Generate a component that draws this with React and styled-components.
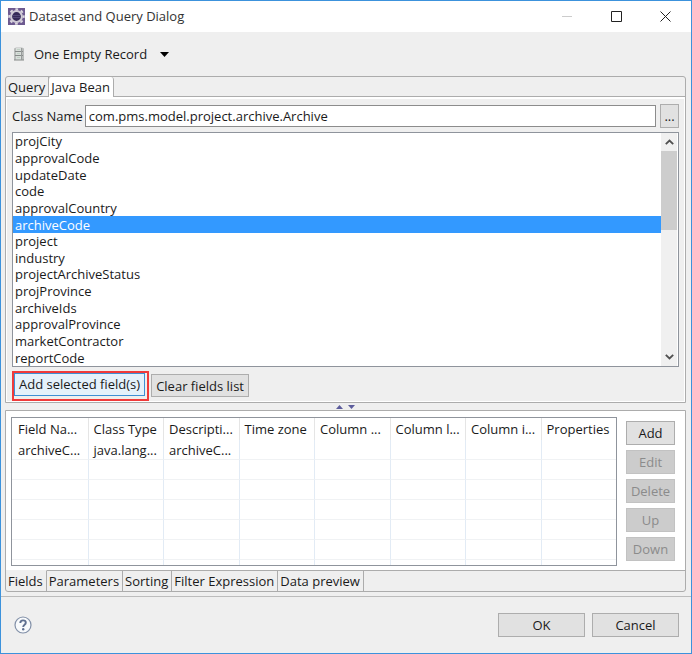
import {useState} from 'react'
import styled, {createGlobalStyle} from 'styled-components'

const beanFields = [
	"projCity",
	"approvalCode",
	"updateDate",
	"code",
	"approvalCountry",
	"archiveCode",
	"project",
	"industry",
	"projectArchiveStatus",
	"projProvince",
	"archiveIds",
	"approvalProvince",
	"marketContractor",
	"reportCode"
]

const columns = ["Field Na...", "Class Type", "Descripti...", "Time zone", "Column ...", "Column l...", "Column i...", "Properties"]

const rows = [
	["archiveC...", "java.lang...", "archiveC...", "", "", "", "", ""],
	["", "", "", "", "", "", "", ""],
	["", "", "", "", "", "", "", ""],
	["", "", "", "", "", "", "", ""],
	["", "", "", "", "", "", "", ""],
	["", "", "", "", "", "", "", ""],
	["", "", "", "", "", "", "", ""]
]

const bottomTabs = ["Fields", "Parameters", "Sorting", "Filter Expression", "Data preview"]

export default function App(){

	const [className, setClassName] = useState("com.pms.model.project.archive.Archive")
	const [selected, setSelected] = useState("archiveCode")
	const [topTab, setTopTab] = useState("Java Bean")
	const [bottomTab, setBottomTab] = useState("Fields")

	return(
		<>
			<GlobalStyle/>
			<Dialog>
				<TitleBar>
					<AppIcon/>
					<Title>Dataset and Query Dialog</Title>
					<TitleButton aria-label="Minimize" disabled>
						<svg width="11" height="11"><path d="M0 5.5h10" stroke="#cccccc"/></svg>
					</TitleButton>
					<TitleButton aria-label="Maximize">
						<svg width="11" height="11"><path d="M.5 .5h10v10h-10z" fill="none" stroke="#222222"/></svg>
					</TitleButton>
					<TitleButton aria-label="Close">
						<svg width="11" height="11"><path d="M.5 .5l10 10M10.5 .5l-10 10" stroke="#222222"/></svg>
					</TitleButton>
				</TitleBar>

				<ToolBar>
					<RecordButton>
						<RecordIcon/>
						One Empty Record
						<svg width="9" height="5"><path d="M0 0h9L4.500 5z" fill="#000000"/></svg>
					</RecordButton>
				</ToolBar>

				<BeanFolder>
					<TopTabs role="tablist">
						{["Query", "Java Bean"].map((elem)=>
							<TopTab key={elem} role="tab" aria-selected={topTab===elem} $active={topTab===elem} onClick={()=>setTopTab(elem)}>{elem}</TopTab>
						)}
					</TopTabs>
					<BeanPanel>
						<ClassRow>
							<label htmlFor="className">Class Name</label>
							<ClassInput id="className" value={className} onChange={(e)=>setClassName(e.target.value)}/>
							<BrowseButton aria-label="Browse">...</BrowseButton>
						</ClassRow>
						<ListBox>
							<FieldList role="listbox" aria-label="Bean fields">
								{beanFields.map((elem)=>
									<FieldItem key={elem} role="option" aria-selected={selected===elem} $active={selected===elem} onClick={()=>setSelected(elem)}>{elem}</FieldItem>
								)}
							</FieldList>
							<ScrollBar>
								<ScrollButton aria-label="Scroll up">
									<svg width="9" height="6"><path d="M.8 5.200L4.500 1.500 8.200 5.200" fill="none" stroke="#505050" strokeWidth="1.800"/></svg>
								</ScrollButton>
								<Thumb/>
								<ScrollButton aria-label="Scroll down">
									<svg width="9" height="6"><path d="M.8 .8L4.500 4.500 8.200 .8" fill="none" stroke="#505050" strokeWidth="1.800"/></svg>
								</ScrollButton>
							</ScrollBar>
						</ListBox>
						<ListActions>
							<RedFrame>
								<ListButton $focused>Add selected field(s)</ListButton>
							</RedFrame>
							<ListButton>Clear fields list</ListButton>
						</ListActions>
					</BeanPanel>
				</BeanFolder>

				<Sash>
					<svg width="19" height="4">
						<path d="M0 4L3.500 0 7 4zM12 0h7l-3.500 4z" fill="#5c5c9c"/>
					</svg>
				</Sash>

				<FieldsFolder>
					<FieldsPanel>
						<TableBox>
							<FieldTable>
								<thead>
									<tr>{columns.map((elem)=><th key={elem}>{elem}</th>)}</tr>
								</thead>
								<tbody>
									{rows.map((row,index)=>
										<tr key={index}>{row.map((cell,i)=><td key={i}>{cell}</td>)}</tr>
									)}
								</tbody>
							</FieldTable>
						</TableBox>
						<SideButtons>
							<Button>Add</Button>
							<Button disabled>Edit</Button>
							<Button disabled>Delete</Button>
							<Button disabled>Up</Button>
							<Button disabled>Down</Button>
						</SideButtons>
					</FieldsPanel>
					<BottomTabs role="tablist">
						{bottomTabs.map((elem)=>
							<BottomTab key={elem} role="tab" aria-selected={bottomTab===elem} $active={bottomTab===elem} onClick={()=>setBottomTab(elem)}>{elem}</BottomTab>
						)}
						<TabFiller/>
					</BottomTabs>
				</FieldsFolder>

				<Footer>
					<HelpButton aria-label="Help">
						<svg width="18" height="18" viewBox="0 0 18 18" fill="none">
							<circle cx="9" cy="9" r="8" fill="#f8fafc" stroke="#8290a8" strokeWidth="1.200"/>
							<path d="M6.300 7C6.300 5.200 7.400 4.400 9 4.400s2.800.9 2.800 2.300c0 2-2.600 2-2.600 4.200" stroke="#5f7090" strokeWidth="1.900"/>
							<circle cx="9.200" cy="13.300" r="1.200" fill="#5f7090"/>
						</svg>
					</HelpButton>
					<FooterButtons>
						<Button>OK</Button>
						<Button>Cancel</Button>
					</FooterButtons>
				</Footer>
			</Dialog>
		</>
	)
}

function AppIcon(){
	return(
		<svg width="17" height="17" viewBox="0 0 17 17">
			<rect width="17" height="17" fill="#6d5a90"/>
			<circle cx="8.500" cy="8.500" r="7.200" fill="none" stroke="#dcd8e0" strokeWidth="2" strokeDasharray="2.830 2.824" strokeDashoffset="1.400"/>
			<circle cx="8.500" cy="8.500" r="5.400" fill="#352a58" stroke="#d0cbd6" strokeWidth="2"/>
			<path d="M4.500 7.500h8M4.500 9.500h8" stroke="#5a5080" strokeWidth=".8"/>
		</svg>
	)
}

function RecordIcon(){
	return(
		<svg width="12" height="14" viewBox="0 0 12 14">
			<path d="M1 1.500L3 .5h6l2 1V13H1z" fill="#b9bcbb"/>
			<path d="M3 1h5v12H3z" fill="#d9dedb"/>
			<path d="M2 4.500h8M2 8.500h8M1 13h10" stroke="#858a88"/>
			<path d="M8.500 1v12" stroke="#979b9a"/>
			<path d="M4 2.500h3M4 6.500h3M4 10.500h3" stroke="#bfd0c4"/>
		</svg>
	)
}

const GlobalStyle = createGlobalStyle`
	* {
		box-sizing: border-box;
	}
	body {
		margin: 0;
		background: #efefef;
	}
	body, button, input {
		font-family: 'Open Sans', 'Noto Sans', sans-serif;
		font-size: 13px;
		line-height: 16px;
		color: #1a1a1a;
	}
	button {
		padding: 0;
		white-space: nowrap;
	}
	svg {
		display: block;
		flex: none;
	}
`

const Dialog = styled.div`
	display: flex;
	flex-direction: column;
	min-height: 100vh;
	border: 1px solid #3c92dc;
	background: #efefef;
`

const TitleBar = styled.header`
	display: flex;
	align-items: center;
	height: 31px;
	padding: 0 1px 1px 7px;
	background: #ffffff;
`

const Title = styled.h1`
	flex: 1;
	margin: 0 0 0 4px;
	font-size: 13px;
	font-weight: 400;
	color: #333333;
`

const TitleButton = styled.button`
	display: flex;
	align-items: center;
	justify-content: center;
	width: 49px;
	height: 30px;
	border: none;
	background: none;
`

const ToolBar = styled.div`
	display: flex;
	align-items: center;
	height: 44px;
	padding-left: 12px;
`

const RecordButton = styled.button`
	display: flex;
	align-items: center;
	border: none;
	background: none;

	svg:first-child{
		margin-right: 9px;
	}
	svg:last-child{
		margin-left: 13px;
	}
`

const BeanFolder = styled.section`
	flex: 1;
	display: flex;
	flex-direction: column;
	margin: 0 5px 0 4px;
	border: 1px solid #acacac;
	border-radius: 3px 3px 0 0;
`

const TopTabs = styled.div`
	display: flex;
	height: 20px;
	border-bottom: 1px solid #acacac;
`

const TopTab = styled.button`
	padding: 0 3px 0 2px;
	border: none;
	border-right: 1px solid #acacac;
	border-left: ${props => props.$active ? '1px solid #acacac' : 'none'};
	border-radius: ${props => props.$active ? '3px 3px 0 0' : '0'};
	background: ${props => props.$active ? '#ffffff' : 'none'};
	margin-bottom: ${props => props.$active ? '-1px' : '0'};
	margin-left: ${props => props.$active ? '-1px' : '0'};
`

const BeanPanel = styled.div`
	flex: 1;
	display: flex;
	flex-direction: column;
	padding: 5px 5px 0;
	border: solid #ffffff;
	border-width: 2px 1px 1px;
`

const ClassRow = styled.div`
	display: flex;
	align-items: center;
	height: 24px;
	margin-bottom: 4px;
`

const ClassInput = styled.input`
	flex: 1;
	min-width: 0;
	height: 22px;
	margin: 0 4px 0 2px;
	padding: 0 3px;
	border: 1px solid #8c8c8c;
	background: #ffffff;
	outline: none;
`

const Button = styled.button`
	height: 24px;
	border: 1px solid ${props => props.disabled ? '#c2c2c2' : '#adadad'};
	background: ${props => props.disabled ? '#cccccc' : '#e1e1e1'};
	color: ${props => props.disabled ? '#8b8b8b' : '#1a1a1a'};
`

const BrowseButton = styled(Button)`
	width: 19px;
`

const ListBox = styled.div`
	flex: 1;
	display: flex;
	border: 1px solid #8f949c;
	background: #ffffff;
`

const FieldList = styled.ul`
	flex: 1;
	display: flex;
	flex-direction: column;
	margin: 0;
	padding: 0;
	list-style: none;
`

const FieldItem = styled.li`
	flex: 1;
	display: flex;
	align-items: center;
	padding-left: 2px;
	background: ${props => props.$active ? '#3399ff' : 'none'};
	color: ${props => props.$active ? '#ffffff' : '#1a1a1a'};
	cursor: default;
`

const ScrollBar = styled.div`
	display: flex;
	flex-direction: column;
	width: 17px;
	border-right: 1px solid #ffffff;
	background: #f0f0f0;

	button:last-child{
		margin-top: auto;
	}
`

const ScrollButton = styled.button`
	display: flex;
	align-items: center;
	justify-content: center;
	height: 18px;
	border: none;
	background: none;
`

const Thumb = styled.div`
	height: 34%;
	background: #cdcdcd;
`

const ListActions = styled.div`
	display: flex;
	align-items: center;
	height: 34px;
	padding-top: 3px;
	gap: 2px;
`

const RedFrame = styled.div`
	padding: 0 2px 3px 0;
	border: 2px solid #f03a3a;
`

const ListButton = styled.button`
	display: block;
	height: 23px;
	padding: 0 4px;
	border: 1px solid ${props => props.$focused ? '#3f8fd4' : '#adadad'};
	background: ${props => props.$focused ? '#e5f1fb' : '#e1e1e1'};
`

const Sash = styled.div`
	display: flex;
	align-items: center;
	justify-content: center;
	height: 7px;
	padding-right: 2px;
`

const FieldsFolder = styled.section`
	margin: 0 5px 0 4px;
	border: 1px solid #acacac;
	border-radius: 0 0 3px 3px;
`

const FieldsPanel = styled.div`
	display: flex;
	gap: 9px;
	padding: 6px 10px 4px 5px;
	background: #ffffff;
`

const TableBox = styled.div`
	flex: 1;
	height: 149px;
	overflow: hidden;
	border: 1px solid #8f949c;
`

const FieldTable = styled.table`
	width: 100%;
	table-layout: fixed;
	border-collapse: separate;
	border-spacing: 0;

	th, td{
		padding: 0 0 0 6px;
		text-align: left;
		font-weight: 400;
		white-space: nowrap;
		overflow: hidden;
	}
	th{
		height: 22px;
	}
	td{
		height: 20px;
		border-bottom: 1px solid #f0f2f4;
	}
	th + th{
		padding-left: 5px;
		border-left: 1px solid #e5e5e5;
	}
	td + td{
		padding-left: 5px;
		border-left: 1px solid #e2ebf5;
	}
`

const SideButtons = styled.div`
	display: flex;
	flex-direction: column;
	gap: 5px;
	width: 49px;
	padding-top: 4px;
`

const BottomTabs = styled.div`
	display: flex;
	height: 21px;
`

const BottomTab = styled.button`
	padding: 0 3px 0 2px;
	border: none;
	border-right: 1px solid #acacac;
	border-top: 1px solid ${props => props.$active ? '#efefef' : '#acacac'};
	background: none;
`

const TabFiller = styled.div`
	flex: 1;
	border-top: 1px solid #acacac;
`

const Footer = styled.footer`
	display: flex;
	align-items: center;
	justify-content: space-between;
	height: 57px;
	margin-top: 4px;
	padding: 0 12px 0 13px;
	border-top: 1px solid #bcbcbc;
`

const HelpButton = styled.button`
	border: none;
	background: none;
`

const FooterButtons = styled.div`
	display: flex;
	gap: 7px;

	button{
		width: 87px;
	}
`
